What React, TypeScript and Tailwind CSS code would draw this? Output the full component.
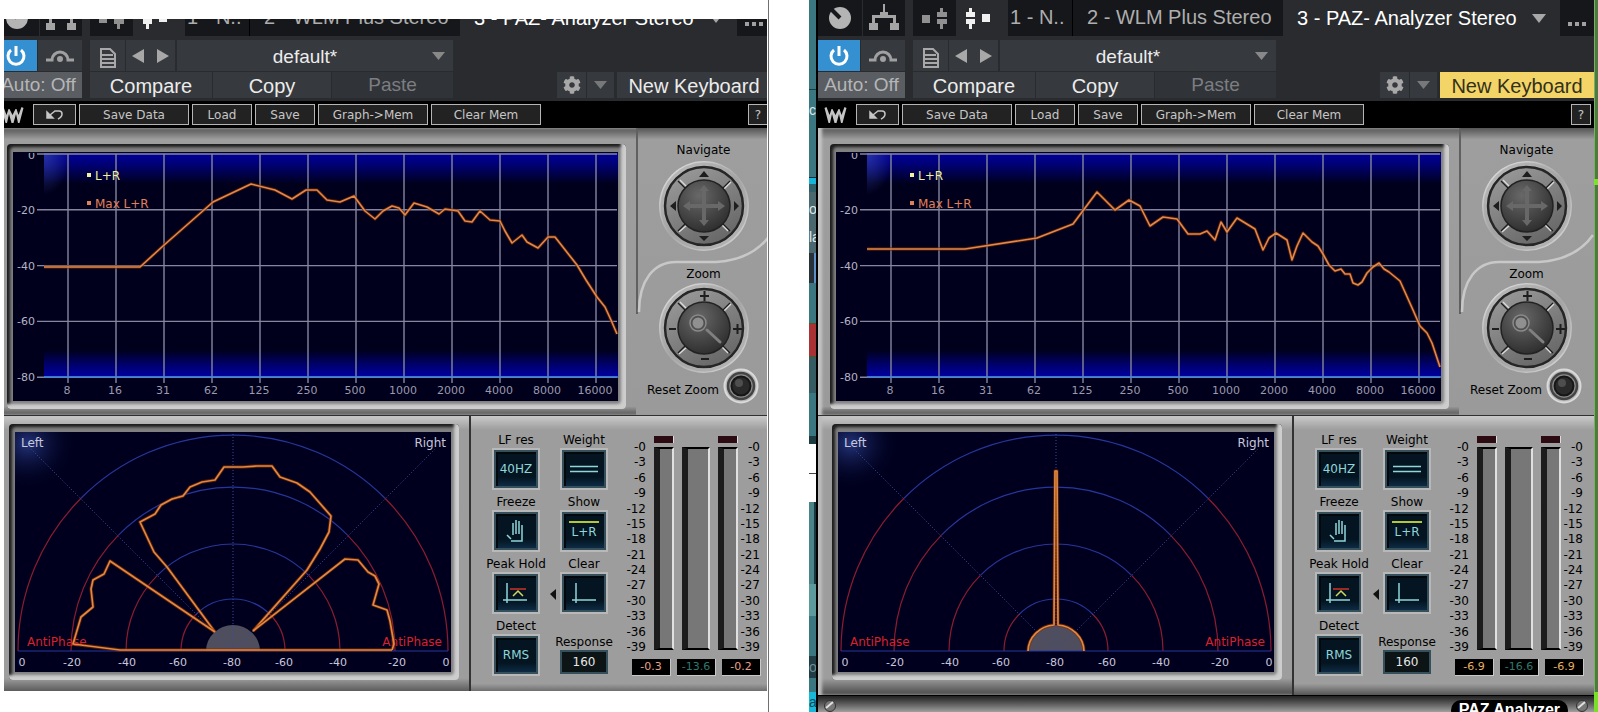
import React, { useId } from 'react';
import clsx from 'clsx';
import { FaCog } from 'react-icons/fa';

interface Reading {
  left: string;
  mid: string;
  right: string;
}

interface PluginProps {
  name: string;
  spectrum: string;
  polar: string[];
  reading: Reading;
  highlight?: boolean;
  warm?: boolean;
}

const scale = [0, 3, 6, 9, 12, 15, 18, 21, 24, 27, 30, 33, 36, 39];
const freqs = ['8', '16', '31', '62', '125', '250', '500', '1000', '2000', '4000', '8000', '16000'];
const levels = ['0', '-20', '-40', '-60', '-80'];

const bassySpectrum =
  '31,115 127,115 150,94 200,50 238,32 262,38 279,47 293,38 304,38 314,48 327,50 341,44 352,59 362,67 370,59 379,54 386,56 392,63 401,51 414,55 426,62 432,57 445,59 452,69 459,70 467,59 477,68 487,69 492,79 499,91 509,83 514,90 525,96 535,85 542,85 553,99 564,113 573,128 584,145 592,155 598,168 604,182';
const flatSpectrum =
  '31,97 129,97 201,86 237,72 261,40 279,58 293,48 304,54 314,74 327,65 341,67 352,82 364,82 371,79 379,88 385,70 391,80 401,66 419,77 427,98 433,86 440,81 451,88 456,108 461,94 467,81 476,90 482,94 487,102 493,113 499,119 505,117 509,122 514,122 517,131 522,133 526,130 531,121 537,115 543,111 548,117 553,120 564,129 577,158 584,174 591,181 596,191 604,215';

const widePolar = [
  'M200 200 L152 135 L139 120 L125 90 L140 82 L146 73 L157 67 L168 64 L175 55 L187 50 L200 48 L209 35 L228 35 L242 34 L257 34 L265 45 L282 51 L295 60 L316 84 L314 100 L305 117 L292 138 L238 199',
  'M238 199 L330 127 L343 128 L353 140 L360 144 L364 152 L358 173 L372 178 L375 189 L379 212 L377 218',
  'M200 200 L95 129 L89 142 L78 148 L76 157 L78 175 L66 185 L58 212 L105 218 H377',
];
const monoPolar = ['M190 219 A28 27 0 0 1 216 193 L217 39 L219 39 L220 193 A28 27 0 0 1 246 219'];

const Spectrum: React.FC<{ points: string }> = ({ points }) => {
  const id = useId();
  return (
    <svg viewBox="0 0 605 249" className="block w-full h-auto bg-[#00001c]" fontFamily="DejaVu Sans, sans-serif" fontSize="11">
      <defs>
        <linearGradient id={`${id}t`} x1="0" y1="0" x2="0" y2="1">
          <stop offset="0" stopColor="#00009a" />
          <stop offset="0.35" stopColor="#000078" />
          <stop offset="1" stopColor="#00001c" />
        </linearGradient>
        <linearGradient id={`${id}b`} x1="0" y1="1" x2="0" y2="0">
          <stop offset="0" stopColor="#0000a0" />
          <stop offset="0.4" stopColor="#000074" />
          <stop offset="1" stopColor="#00001c" />
        </linearGradient>
        <radialGradient id={`${id}g`} cx="0" cy="0" r="1">
          <stop offset="0" stopColor="#3848b0" stopOpacity="0.7" />
          <stop offset="1" stopColor="#3848b0" stopOpacity="0" />
        </radialGradient>
      </defs>
      <rect x="31" y="1" width="574" height="31" fill={`url(#${id}t)`} />
      <rect x="31" y="198" width="574" height="27" fill={`url(#${id}b)`} />
      <rect x="31" y="1" width="26" height="42" fill={`url(#${id}g)`} />
      <g stroke="#85869e" strokeWidth="1.4">
        {freqs.map((f, i) => (
          <line key={f} x1={55 + i * 48} x2={55 + i * 48} y1="2" y2="231" />
        ))}
        {levels.map((l, i) => (
          <line key={l} x1="24" x2="604" y1={2 + i * 55.8} y2={2 + i * 55.8} />
        ))}
      </g>
      <line x1="31" x2="605" y1="225" y2="225" stroke="#3f86dc" strokeWidth="1.6" />
      <g fill="#b4b4c4">
        {levels.map((l, i) => (
          <text key={l} x="22" y={(i === 0 ? 7 : 6) + i * 55.8} textAnchor="end">{l}</text>
        ))}
      </g>
      <rect x="0" y="0" width="28" height="1" fill="#00001c" />
      <g fill="#9a9aac">
        {freqs.map((f, i) => (
          <text key={f} x={54 + i * 48} y="242" textAnchor="middle">{f}</text>
        ))}
      </g>
      <g fill="#f2f29a" fontSize="12">
        <rect x="74" y="21" width="4" height="4" />
        <text x="82" y="28">L+R</text>
      </g>
      <g fill="#e0805a" fontSize="12">
        <rect x="74" y="49" width="4" height="4" />
        <text x="82" y="56">Max L+R</text>
      </g>
      <polyline points={points} fill="none" stroke="#7a2400" strokeOpacity="0.6" strokeWidth="3.4" strokeLinejoin="round" />
      <polyline points={points} fill="none" stroke="#e08a4a" strokeWidth="1.6" strokeLinejoin="round" />
    </svg>
  );
};

const radii = [[215, 216], [162, 164], [107, 107], [52, 52]];
const D = 0.707;

const Polar: React.FC<{ paths: string[] }> = ({ paths }) => {
  const id = useId();
  return (
    <svg viewBox="0 0 436 240" className="block w-full h-auto bg-[#00001e]" fontFamily="DejaVu Sans, sans-serif" fontSize="11">
      <defs>
        <radialGradient id={`${id}g`} cx="0.2" cy="0.2" r="0.8">
          <stop offset="0" stopColor="#23347a" />
          <stop offset="1" stopColor="#00001e" stopOpacity="0" />
        </radialGradient>
      </defs>
      <rect width="62" height="58" fill={`url(#${id}g)`} />
      <path d="M191 219 A27 26 0 0 1 245 219 Z" fill="#4e4e5e" />
      {radii.map(([rx, ry]) => (
        <g key={rx} fill="none">
          <path
            d={`M${218 - rx * D} ${219 - ry * D} A${rx} ${ry} 0 0 1 ${218 + rx * D} ${219 - ry * D}`}
            stroke="#27369c"
            strokeWidth="1.2"
          />
          <path
            d={`M${218 - rx} 219 A${rx} ${ry} 0 0 1 ${218 - rx * D} ${219 - ry * D} M${218 + rx} 219 A${rx} ${ry} 0 0 0 ${218 + rx * D} ${219 - ry * D}`}
            stroke="#8c1c30"
            strokeWidth="1.2"
          />
        </g>
      ))}
      <path d="M218 219 V2 M218 219 L16 17 M218 219 L420 17" stroke="#3a4a9c" strokeWidth="1" strokeDasharray="1 2" fill="none" />
      <path d="M3 219 H433" stroke="#27369c" strokeWidth="1.2" />
      <g fill="#c8c8dc">
        <text x="6" y="15" fontSize="12">Left</text>
        <text x="431" y="15" fontSize="12" textAnchor="end">Right</text>
        {['0', '-20', '-40', '-60', '-80', '-60', '-40', '-20', '0'].map((t, i) => (
          <text key={i} x={[7, 57, 112, 163, 217, 269, 323, 382, 431][i]} y="234" textAnchor="middle">{t}</text>
        ))}
      </g>
      <g fill="#d8202c" fontSize="12">
        <text x="12" y="214">AntiPhase</text>
        <text x="427" y="214" textAnchor="end">AntiPhase</text>
      </g>
      {paths.map((d) => (
        <g key={d} fill="none" strokeLinejoin="round">
          <path d={d} stroke="#8a2c00" strokeOpacity="0.6" strokeWidth="3.4" />
          <path d={d} stroke="#e08a40" strokeWidth="1.7" />
        </g>
      ))}
    </svg>
  );
};

// sunken frame round both displays
const Bezel: React.FC<{ children: React.ReactNode }> = ({ children }) => (
  <div className="rounded bg-[#808080] pt-2 pr-2 pb-2 pl-1.5 shadow-[inset_-5px_-5px_3px_#cdcdcd,inset_3px_3px_3px_#1c1c1c]">
    {children}
  </div>
);

const Dial: React.FC<{ kind: 'navigate' | 'zoom' }> = ({ kind }) => {
  const id = useId();
  return (
    <svg viewBox="0 0 92 92" className="block w-full h-auto" aria-hidden="true">
      <defs>
        <linearGradient id={`${id}r`} x1="0.1" y1="0" x2="0.9" y2="1">
          <stop offset="0" stopColor="#e2e2e2" />
          <stop offset="0.5" stopColor="#a8a8a8" />
          <stop offset="1" stopColor="#d6d6d6" />
        </linearGradient>
        <linearGradient id={`${id}m`} x1="0.2" y1="0" x2="0.8" y2="1">
          <stop offset="0" stopColor="#9a9a9a" />
          <stop offset="1" stopColor="#646464" />
        </linearGradient>
        <radialGradient id={`${id}c`} cx="0.4" cy="0.3" r="0.75">
          <stop offset="0" stopColor="#686868" />
          <stop offset="1" stopColor="#2c2c2c" />
        </radialGradient>
      </defs>
      <circle cx="46" cy="46" r="45" fill={`url(#${id}r)`} />
      <circle cx="46" cy="46" r="42" fill="none" stroke="#a2a2a2" strokeWidth="3" strokeOpacity="0.6" />
      <circle cx="46" cy="46" r="39" fill={`url(#${id}m)`} stroke="#262626" strokeWidth="2.5" />
      <g strokeWidth="1.3">
        <path d="M20 21 L28 29 M72 21 L64 29 M20 71 L28 63 M72 71 L64 63" stroke="#1c1c1c" />
        <path d="M22 20 L29 27 M73 22 L66 29 M21 72 L29 65 M70 71 L63 64" stroke="#dcdcdc" />
      </g>
      <circle cx="46" cy="46" r="26" fill={`url(#${id}c)`} stroke="#222" strokeWidth="1.5" />
      {kind === 'navigate' ? (
        <>
          <path d="M46 11 L51 17 H41 Z M46 81 L51 76 H41 Z M12 46 L18 41 V51 Z M81 46 L76 41 V51 Z" fill="#1e1e1e" />
          <path
            d="M46 25 L51 31 H48 V44 H60 V41 L67 46 L60 51 V48 H48 V60 H51 L46 66 L41 60 H44 V48 H32 V51 L25 46 L32 41 V44 H44 V31 H41 Z"
            fill="#686868"
          />
        </>
      ) : (
        <>
          <path d="M42 14 H51 M46.500 9 V19 M75 47 H84 M79.500 42 V52 M11 47 H18 M43 77 H51" stroke="#1e1e1e" strokeWidth="2" />
          <path d="M49 48 L62 60" stroke="#808080" strokeWidth="3" strokeLinecap="round" />
          <circle cx="40" cy="41" r="8" fill="#505050" stroke="#8a8a8a" strokeWidth="1.5" />
          <circle cx="40" cy="41" r="5.500" fill="#909090" />
        </>
      )}
    </svg>
  );
};

const ToolButton: React.FC<{ className: string; children: React.ReactNode; label?: string }> = ({ className, children, label }) => (
  <button
    aria-label={label}
    className={clsx('flex h-[21px] shrink-0 items-center justify-center border border-[#b5b5b5] bg-[#222] text-xs text-[#c6c6c6]', className)}
  >
    {children}
  </button>
);

const Control: React.FC<{ label: string; children: React.ReactNode }> = ({ label, children }) => (
  <div className="flex w-[68px] flex-col items-center">
    <span className="h-4 whitespace-nowrap text-xs leading-4 text-black">{label}</span>
    <button
      aria-label={label}
      className="flex h-[42px] w-12 items-center justify-center border-2 border-[#b8b8b8] bg-linear-to-b from-[#041420] from-70% to-[#10304c] text-xs text-[#8fd6da] shadow-[inset_0_0_0_2px_#35505a,inset_2px_2px_0_2px_#02080c]"
    >
      {children}
    </button>
  </div>
);

const Scale: React.FC<{ className: string }> = ({ className }) => (
  <ul className={clsx('flex flex-col justify-between self-stretch text-right text-xs leading-[14px] text-black', className)}>
    {scale.map((n) => (
      <li key={n}>-{n}</li>
    ))}
  </ul>
);

const Meter: React.FC<{ wide?: boolean }> = ({ wide }) => (
  <div className={clsx('flex flex-col gap-1', wide ? 'w-7' : 'w-5')}>
    <div className={clsx('h-[7px]', !wide && 'border-r border-[#ddd] bg-[#2c0c12]')} />
    <div className="flex-1 border-2 border-l-[6px] border-black border-r-[#e0e0e0] border-l-[#1c1c1c] bg-[#777]" />
  </div>
);

const Readout: React.FC<{ value: string; className: string }> = ({ value, className }) => (
  <output className={clsx('h-[17px] w-[39px] border-r border-b border-[#c8c8c8] bg-black text-center text-[11px] leading-4', className)}>
    {value}
  </output>
);

const Host: React.FC<{ highlight?: boolean }> = ({ highlight }) => (
  <header className="bg-[#292b2f] font-['Liberation_Sans',Arial,sans-serif] text-[19px] leading-6 text-[#ececec]">
    <div className="flex h-9 text-[#aeaeae]">
      <button aria-label="Remote" className="flex w-11 items-center justify-center bg-[#16171a]">
        <svg width="24" height="24" viewBox="0 0 24 24" aria-hidden="true">
          <circle cx="12" cy="12" r="11" fill="#b4b4b4" />
          <path d="M3 3 L12 12" stroke="#16171a" strokeWidth="4" />
        </svg>
      </button>
      <button aria-label="Routing" className="ml-px flex w-[42px] items-center justify-center bg-[#16171a]">
        <svg width="32" height="28" viewBox="0 0 32 28" fill="#a4a4a4" aria-hidden="true">
          <path d="M15 0 H17 V8 H20 V11 H28 V19 H31 V26 H22 V19 H25 V14 H7 V19 H10 V26 H1 V19 H4 V11 H12 V8 H15 Z" />
        </svg>
      </button>
      <button aria-label="Sidechain in" className="ml-2 flex w-[43px] items-center justify-center bg-[#16171a]">
        <svg width="26" height="22" viewBox="0 0 26 22" fill="#909090" aria-hidden="true">
          <path d="M0 8 H8 V16 H0 Z M15 5 H18 V1 H21 V5 H25 V10 H15 Z M15 12 H25 V17 H21 V22 H18 V17 H15 Z" />
        </svg>
      </button>
      <button aria-label="Sidechain out" className="flex w-11 items-center justify-center">
        <svg width="26" height="22" viewBox="0 0 26 22" fill="#f0f0f0" aria-hidden="true">
          <path d="M17 7 H25 V15 H17 Z M1 5 H4 V1 H7 V5 H10 V10 H1 Z M1 12 H10 V17 H7 V22 H4 V17 H1 Z" />
        </svg>
      </button>
      <nav className="ml-2 flex min-w-0 flex-1 whitespace-nowrap text-xl leading-[34px]">
        <a href="#one" className="w-[65px] shrink-0 border-r border-black bg-[#16171a] pl-0.5">1 - N..</a>
        <a href="#two" className="w-[210px] shrink-0 bg-[#16171a] pl-3.5">2 - WLM Plus Stereo</a>
        <a href="#three" className="flex min-w-0 flex-1 items-center justify-between px-3.5 text-white">
          3 - PAZ- Analyzer Stereo
          <svg width="14" height="9" viewBox="0 0 14 9" fill="#a8a8a8" aria-hidden="true"><path d="M0 0 H14 L7 9 Z" /></svg>
        </a>
      </nav>
      <button aria-label="More" className="flex w-[34px] items-center justify-center bg-[#16171a] pt-3">
        <svg width="18" height="4" viewBox="0 0 18 4" fill="#a0a0a0" aria-hidden="true">
          <path d="M0 0 H4 V4 H0 Z M7 0 H11 V4 H7 Z M14 0 H18 V4 H14 Z" />
        </svg>
      </button>
    </div>
    <div className="mt-1 flex h-[31px]">
      <button aria-label="Power" className="flex w-[42px] items-center justify-center bg-[#3490d0]">
        <svg width="20" height="22" viewBox="0 0 20 22" fill="none" stroke="#fff" strokeWidth="3" aria-hidden="true">
          <path d="M5 5 A8 8 0 1 0 15 5 M10 1 V11" />
        </svg>
      </button>
      <button aria-label="Bypass" className="ml-px flex w-11 items-center justify-center bg-[#36393d]">
        <svg width="28" height="16" viewBox="0 0 28 16" aria-hidden="true">
          <path d="M0 12 H6 A8 8 0 0 1 22 12 H28" fill="none" stroke="#a0a0a0" strokeWidth="3" />
          <circle cx="14" cy="11" r="3" fill="#a0a0a0" />
        </svg>
      </button>
      <button aria-label="Preset menu" className="ml-2 flex w-[35px] items-center justify-center bg-[#36393d] pt-1">
        <svg width="16" height="20" viewBox="0 0 16 20" fill="none" stroke="#a8a8a8" strokeWidth="2" aria-hidden="true">
          <path d="M1 1 H10 L15 6 V19 H1 Z M1 7 H13 M1 11 H15 M1 15 H15" />
        </svg>
      </button>
      <div className="ml-px flex w-[49px] bg-[#36393d]">
        <button aria-label="Previous preset" className="flex flex-1 items-center justify-center">
          <svg width="12" height="14" viewBox="0 0 12 14" fill="#a8a8a8" aria-hidden="true"><path d="M12 0 V14 L0 7 Z" /></svg>
        </button>
        <button aria-label="Next preset" className="flex flex-1 items-center justify-center">
          <svg width="12" height="14" viewBox="0 0 12 14" fill="#a8a8a8" aria-hidden="true"><path d="M0 0 V14 L12 7 Z" /></svg>
        </button>
      </div>
      <div className="relative ml-0.5 w-[276px] bg-[#36393d]">
        <select aria-label="Preset" className="h-full w-full appearance-none pt-0.5 pr-5 [text-align-last:center] text-[#ececec]">
          <option>default*</option>
        </select>
        <svg className="absolute top-3 right-2" width="13" height="8" viewBox="0 0 13 8" fill="#888" aria-hidden="true">
          <path d="M0 0 H13 L6.500 8 Z" />
        </svg>
      </div>
    </div>
    <div className="mt-px flex h-[29px] pb-[3px]">
      <button className="w-[87px] bg-[#5a5d61] text-[#b4b6b8]">Auto: Off</button>
      <button className="ml-2 w-[122px] bg-[#36393d] text-xl">Compare</button>
      <button className="ml-px w-[118px] bg-[#36393d] text-xl">Copy</button>
      <button className="ml-px w-[121px] bg-[#303337] text-[#7c7e82]">Paste</button>
      <button aria-label="Settings" className="ml-auto flex w-[29px] items-center justify-center bg-[#36393d]">
        <FaCog size={18} color="#a8a8a8" />
      </button>
      <button aria-label="Settings menu" className="ml-px flex w-[27px] items-center justify-center bg-[#36393d]">
        <svg width="13" height="8" viewBox="0 0 13 8" fill="#76787a" aria-hidden="true"><path d="M0 0 H13 L6.500 8 Z" /></svg>
      </button>
      <button className={clsx('ml-[3px] w-[154px] text-xl', highlight ? 'bg-[#f2d566] text-[#33301c]' : 'bg-[#36393d]')}>New Keyboard</button>
    </div>
  </header>
);

const Plugin: React.FC<PluginProps> = ({ name, spectrum, polar, reading, highlight, warm }) => (
  <div className="font-['DejaVu_Sans',sans-serif]">
    <Host highlight={highlight} />

    <div className="flex h-[27px] items-center gap-[3px] bg-black pr-[3px]">
      <svg className="mx-1.5 shrink-0" width="23" height="18" viewBox="0 0 22 18" fill="#c4c4c4" aria-hidden="true">
        <path d="M0 2 L2 1 L5 9 L7 3 L8 3 L11 9 L14 3 L15 3 L17 9 L20 1 L22 2 L18 17 H16.500 L14.500 8 L12 17 H10 L7.500 8 L5.500 17 H4 Z" />
      </svg>
      <ToolButton label="Undo" className="w-[43px]">
        <svg width="18" height="12" viewBox="0 0 18 12" fill="none" stroke="#c6c6c6" strokeWidth="1.500" aria-hidden="true">
          <path d="M4 6 L9 2 H13 Q16 2 16 5 Q16 8 12 10" />
          <path d="M1 3 L7 9 H1 Z" fill="#c6c6c6" />
        </svg>
      </ToolButton>
      <ToolButton className="w-[110px]">Save Data</ToolButton>
      <ToolButton className="w-[60px]">Load</ToolButton>
      <ToolButton className="w-[60px]">Save</ToolButton>
      <ToolButton className="w-[110px]">Graph-&gt;Mem</ToolButton>
      <ToolButton className="w-[110px]">Clear Mem</ToolButton>
      <ToolButton className="ml-auto w-5" label="Help">?</ToolButton>
    </div>

    <div className="bg-[#9d9d9d]">
      <section className="flex border-b border-[#303030] bg-linear-to-b from-[#555] from-0% via-[#9e9e9e] via-4% to-[#9a9a9a]">
        <div className="min-w-0 flex-1 bg-linear-to-b from-transparent from-97% to-[#555] pt-4 pr-2.5 pb-1.5 pl-3 shadow-[inset_4px_0_3px_#c4c4c4]">
          <Bezel>
            <Spectrum points={spectrum} />
          </Bezel>
        </div>
        <div className="relative w-[135px] shrink-0 pt-3 text-center text-xs text-black">
          <svg className="absolute inset-0 h-full w-full" viewBox="0 0 135 287" fill="none" aria-hidden="true">
            <path d="M1 0 V186" stroke="#606060" strokeWidth="2" />
            <path d="M3 184 C3 152 18 134 40 134 H80 C110 132 125 120 134 107" stroke="#c8c8c8" strokeWidth="2.500" />
          </svg>
          <div className="relative flex flex-col items-center">
            <span className="h-5 leading-5">Navigate</span>
            <button aria-label="Navigate" className="w-[92px]"><Dial kind="navigate" /></button>
            <span className="mt-3 h-[18px] leading-5">Zoom</span>
            <button aria-label="Zoom" className="w-[92px]"><Dial kind="zoom" /></button>
          </div>
          <label className="relative -mt-2.5 flex items-center justify-end gap-1 pt-1 pr-3">
            <span className="mt-2 whitespace-nowrap">Reset Zoom</span>
            <button aria-label="Reset Zoom" className="w-9 shrink-0">
              <svg viewBox="0 0 36 36" className="block h-auto w-full" aria-hidden="true">
                <circle cx="18" cy="18" r="16.500" fill="#b8b8b8" stroke="#dadada" strokeWidth="2" />
                <circle cx="18" cy="18" r="13" fill="#8c8c8c" stroke="#444" strokeWidth="2.500" />
                <circle cx="18" cy="18" r="9.500" fill="#2a2a2a" stroke="#161616" strokeWidth="2" />
                <circle cx="16" cy="15" r="4" fill="#4e4e4e" />
              </svg>
            </button>
          </label>
        </div>
      </section>

      <section className="flex bg-linear-to-b from-[#cacaca] from-0% via-[#9d9d9d] via-5% to-[#9d9d9d]">
        <div className="min-w-0 flex-1 bg-linear-to-b from-transparent from-94% to-[#484848] pt-2 pr-2.5 pb-[15px] pl-3.5 shadow-[inset_4px_0_3px_#bcbcbc]">
          <Bezel>
            <Polar paths={polar} />
          </Bezel>
        </div>
        <div className="flex w-[302px] shrink-0 border-l-2 border-[#333] bg-linear-to-b from-transparent from-96% to-[#555] pt-4">
          <div className="ml-[11px] flex w-[68px] flex-col gap-1">
            <Control label="LF res">40HZ</Control>
            <Control label="Freeze">
              <svg width="20" height="24" viewBox="0 0 20 24" fill="none" stroke="#8fd6da" strokeWidth="1.500" aria-hidden="true">
                <path d="M7 4 V16 M10 1 V15 M13 2 V15 M16 6 V19 M1 16 L5 20 M5 22 H16 V17" />
              </svg>
            </Control>
            <Control label="Peak Hold">
              <svg width="26" height="22" viewBox="0 0 26 22" fill="none" stroke="#8fd6da" strokeWidth="1.500" aria-hidden="true">
                <path d="M4 1 V21 M0 18 H24" />
                <path d="M7 7 H23" stroke="#d03028" />
                <path d="M10 14 L15 9 L20 14" stroke="#d0d860" />
              </svg>
            </Control>
            <Control label="Detect">RMS</Control>
          </div>
          <div className="relative flex w-[68px] flex-col gap-1">
            <Control label="Weight">
              <svg width="28" height="8" viewBox="0 0 28 8" stroke="#8fd6da" strokeWidth="1.500" aria-hidden="true"><path d="M0 1.500 H28 M0 6.500 H28" /></svg>
            </Control>
            <Control label="Show">
              <span className="border-t-2 border-[#b4c832] px-0.5 leading-[18px]">L+R</span>
            </Control>
            <Control label="Clear">
              <svg width="24" height="22" viewBox="0 0 24 22" fill="none" stroke="#8fd6da" strokeWidth="1.500" aria-hidden="true">
                <path d="M4 1 V21 M0 18 H24" />
              </svg>
            </Control>
            <svg className="absolute top-[157px] left-0" width="6" height="11" viewBox="0 0 6 11" fill="#111" aria-hidden="true">
              <path d="M6 0 V11 L0 5 Z" />
            </svg>
            <label className="mt-4 flex flex-col items-center text-xs leading-4 text-black">
              Response
              <input
                type="text"
                defaultValue="160"
                aria-label={`Response, ${name}`}
                className="h-6 w-12 border-2 border-[#35505a] bg-[#0c1416] text-center text-xs text-[#e6e6e6]"
              />
            </label>
          </div>
          <div className="flex flex-1 flex-col">
            <div className="mt-1 flex h-[214px] gap-2">
              <Scale className="mt-1 -mb-1 w-7" />
              <Meter />
              <Meter wide />
              <Meter />
              <Scale className="mt-1 -mb-1 -ml-2 w-[22px]" />
            </div>
            <div className="mt-[9px] ml-3.5 flex gap-1.5">
              <Readout value={reading.left} className={warm ? 'text-[#e8a088]' : 'text-[#e8b060]'} />
              <Readout value={reading.mid} className="text-[#30786e]" />
              <Readout value={reading.right} className={warm ? 'text-[#e8a088]' : 'text-[#e8b060]'} />
            </div>
          </div>
        </div>
      </section>
    </div>
  </div>
);

const Screw: React.FC = () => (
  <svg width="12" height="12" viewBox="0 0 12 12" className="shrink-0" aria-hidden="true">
    <circle cx="6" cy="6" r="5.500" fill="#777" stroke="#333" />
    <path d="M2 8 L9 2" stroke="#e0e0e0" strokeWidth="2" />
  </svg>
);

const TrackStrip: React.FC = () => (
  <div className="flex w-[7px] shrink-0 flex-col overflow-hidden bg-[#3a7780] font-['Liberation_Sans',Arial,sans-serif] text-sm text-[#dfe8ea]">
    <div className="h-[90px] border-b border-[#1c3c42]" />
    <div className="flex h-[87px] items-start pt-2.5">c</div>
    <div className="h-[7px] border-t border-[#103038] bg-[#18b4dc]" />
    <div className="h-2 bg-[#30606a]" />
    <div className="flex h-[61px] flex-col justify-center gap-1.5 bg-[#4a686e] leading-[22px]">
      <span>o</span>
      <span>la</span>
    </div>
    <div className="h-[30px] border-r-2 border-[#5c90c8] bg-[#283038]" />
    <div className="h-10" />
    <div className="h-[34px] border-y border-[#552] bg-[#a83234]" />
    <div className="h-9 bg-[#345c62]" />
    <div className="h-[43px]" />
    <div className="h-2 bg-[#1c3c42]" />
    <div className="h-[30px] border-b border-[#444] bg-white" />
    <div className="h-7 bg-white" />
    <div className="h-[82px] border-r-2 border-[#183840] bg-[#4a8488]" />
    <div className="h-8 bg-[#5c9a9c]" />
    <div className="h-10" />
    <div className="flex h-[22px] items-center bg-[#203c44] text-[#6c8c94]">o</div>
    <div className="h-[14px]" />
    <div className="h-5 bg-[#18b8d8] leading-5 text-[#104858]">ai</div>
  </div>
);

const App: React.FC = () => (
  <main className="grid grid-cols-[769fr_829fr] bg-white">
    <div className="border-r border-[#707070] pt-[19px] pr-px pl-1">
      <div className="overflow-hidden">
        <div className="-mt-[19px] -mr-1 -mb-1 -ml-[9px]">
          <Plugin
            name="before"
            spectrum={bassySpectrum}
            polar={widePolar}
            reading={{ left: '-0.3', mid: '-13.6', right: '-0.2' }}
            warm
          />
        </div>
      </div>
    </div>

    <div className="flex pl-10">
      <TrackStrip />
      <div className="min-w-0 flex-1 border-l-2 border-black">
        <Plugin
          name="after"
          spectrum={flatSpectrum}
          polar={monoPolar}
          reading={{ left: '-6.9', mid: '-16.6', right: '-6.9' }}
          highlight
        />
        <footer className="flex h-[17px] items-start justify-between overflow-hidden border-t border-black bg-linear-to-b from-[#222] to-[#a0a0a0] px-1.5 pt-1">
          <Screw />
          <div className="flex">
            <h1 className="mr-2 rounded-full bg-black px-2 font-['Liberation_Sans',Arial,sans-serif] text-base leading-5 font-bold whitespace-nowrap text-white">
              PAZ Analyzer
            </h1>
            <Screw />
          </div>
        </footer>
      </div>
      <div className="flex w-1 shrink-0 flex-col bg-[#4c7a40]">
        <div className="h-[179px] border-l border-[#7ab060]" />
        <div className="h-1.5 bg-[#80e030]" />
        <div className="flex-1 border-l border-[#7ab060]" />
        <div className="h-5 bg-[#78e028]" />
      </div>
    </div>
  </main>
);

export default App;
